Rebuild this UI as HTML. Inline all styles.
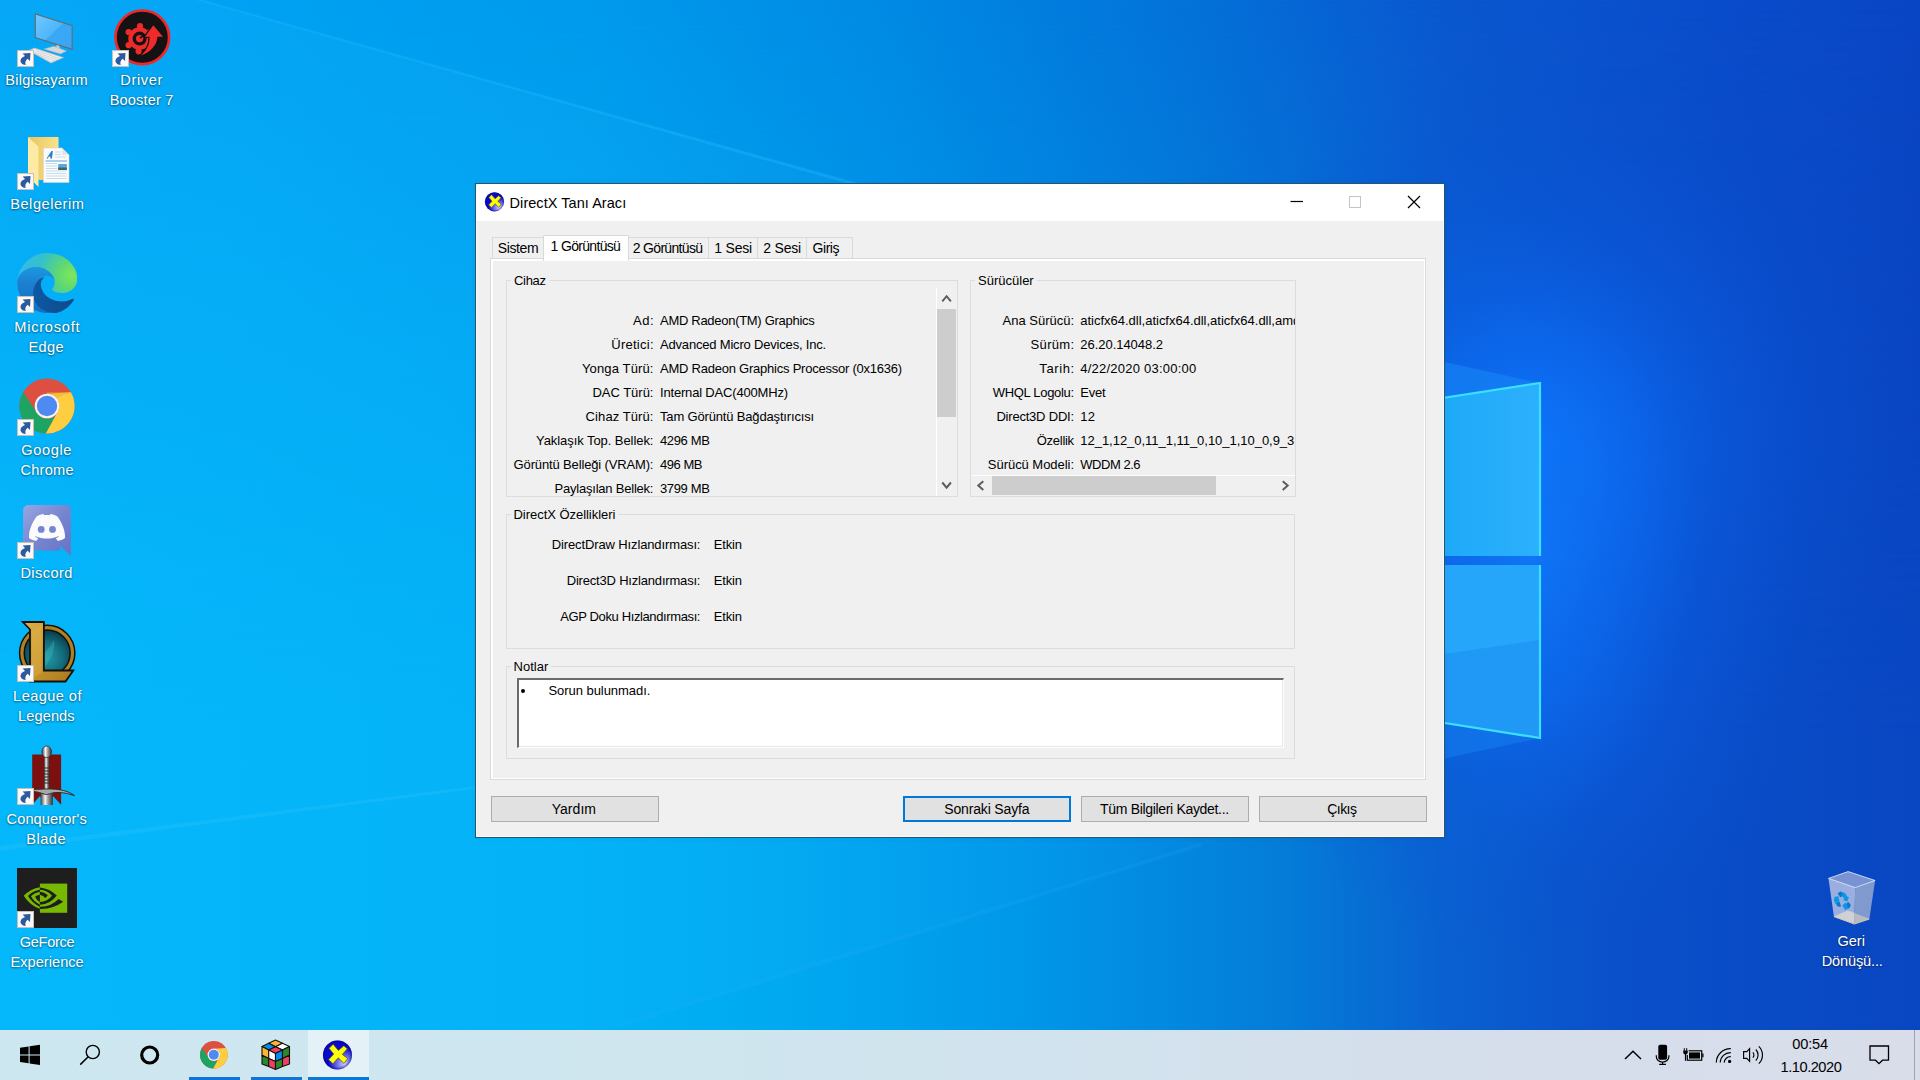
<!DOCTYPE html>
<html><head><meta charset="utf-8">
<style>
*{box-sizing:border-box;margin:0;padding:0}
html,body{width:1920px;height:1080px;overflow:hidden;background:#0078d7;font-family:"Liberation Sans",sans-serif;}
.abs{position:absolute}
#wall{position:absolute;left:0;top:0;width:1920px;height:1080px}
/* desktop icon labels */
.lbl{position:absolute;color:#fff;font-size:15px;line-height:20px;text-align:center;white-space:nowrap;text-shadow:0 1px 2px rgba(0,0,0,.45),0 0 2px rgba(0,0,0,.25);transform:translateX(-50%)}
/* dialog */
#dlg{position:absolute;left:475px;top:183px;width:970px;height:655px;background:#f0f0f0;border:1px solid #26566e;box-shadow:inset 0 0 0 1px #f9f9f9,0 0 6px rgba(0,0,0,.05)}
#ttl{position:absolute;left:0;top:0;width:968px;height:37px;background:#fff}
.t{position:absolute;white-space:nowrap;color:#000;font-size:13px;line-height:16px}
.r{text-align:right}
.grp{position:absolute;border:1px solid #dcdcdc}
.gl{position:absolute;background:#f0f0f0;padding:0 3px;font-size:13px;line-height:16px;white-space:nowrap}
.btn{position:absolute;height:26px;background:#e1e1e1;border:1px solid #adadad;font-size:14.5px;line-height:24px;text-align:center;white-space:nowrap}
.tab{position:absolute;top:237px;height:21px;border:1px solid #d9d9d9;border-bottom:none;background:#f0f0f0}
/* taskbar */
#tb{position:absolute;left:0;top:1030px;width:1920px;height:50px;background:linear-gradient(90deg,#cde7f0 0%,#cfe6ef 35%,#d1e3ee 55%,#d5deeb 75%,#d9ddea 100%)}
</style></head><body>
<svg id="wall" viewBox="0 0 1920 1080">
<defs>
<linearGradient id="bgt" x1="0" y1="0" x2="1" y2="0">
<stop offset="0" stop-color="#00a3f4"/><stop offset=".12" stop-color="#00a2f3"/><stop offset=".31" stop-color="#009aec"/><stop offset=".47" stop-color="#0089e4"/><stop offset=".63" stop-color="#0470d8"/><stop offset=".75" stop-color="#0a58d0"/><stop offset=".9" stop-color="#0a4ccb"/><stop offset="1" stop-color="#0945c4"/>
</linearGradient>
<linearGradient id="bgb" x1="0" y1="0" x2="1" y2="0">
<stop offset="0" stop-color="#00b6fa"/><stop offset=".3" stop-color="#00b2f6"/><stop offset=".42" stop-color="#00a8f0"/><stop offset=".54" stop-color="#0096e8"/><stop offset=".67" stop-color="#047cd8"/><stop offset=".755" stop-color="#0a60d0"/><stop offset=".84" stop-color="#0a50ca"/><stop offset="1" stop-color="#0946c2"/>
</linearGradient>
<linearGradient id="cone" x1="0" y1="0" x2="1500" y2="0" gradientUnits="userSpaceOnUse"><stop offset="0" stop-color="#20c0ff" stop-opacity=".16"/><stop offset=".5" stop-color="#20b0ff" stop-opacity=".12"/><stop offset="1" stop-color="#2090ff" stop-opacity="0"/></linearGradient>
<linearGradient id="vm" x1="0" y1="0" x2="0" y2="1"><stop offset="0" stop-color="#fff" stop-opacity="0"/><stop offset=".28" stop-color="#fff" stop-opacity=".45"/><stop offset=".52" stop-color="#fff" stop-opacity=".85"/><stop offset=".68" stop-color="#fff" stop-opacity="1"/><stop offset="1" stop-color="#fff" stop-opacity="1"/></linearGradient>
<mask id="mk"><rect width="1920" height="1080" fill="url(#vm)"/></mask>
<radialGradient id="glow" cx="1535" cy="440" r="360" gradientUnits="userSpaceOnUse"><stop offset="0" stop-color="#0e74fa" stop-opacity=".95"/><stop offset=".3" stop-color="#0c68f0" stop-opacity=".7"/><stop offset=".65" stop-color="#0a58dc" stop-opacity=".35"/><stop offset="1" stop-color="#0a50d0" stop-opacity="0"/></radialGradient>
<radialGradient id="glow2" cx="1535" cy="660" r="300" gradientUnits="userSpaceOnUse"><stop offset="0" stop-color="#0e6cf4" stop-opacity=".7"/><stop offset=".4" stop-color="#0c60e6" stop-opacity=".4"/><stop offset="1" stop-color="#0a50d0" stop-opacity="0"/></radialGradient>
<radialGradient id="band" cx="0" cy="0" r="1" gradientUnits="userSpaceOnUse" gradientTransform="translate(1530 555) scale(170 270)"><stop offset="0" stop-color="#1280ff" stop-opacity=".6"/><stop offset=".45" stop-color="#0e76f8" stop-opacity=".38"/><stop offset="1" stop-color="#0c6cf0" stop-opacity="0"/></radialGradient>
<linearGradient id="pane" x1="0" y1="0" x2="1" y2="0"><stop offset="0" stop-color="#14a6f6"/><stop offset=".6" stop-color="#1eaaf9"/><stop offset="1" stop-color="#2cb0fc"/></linearGradient>
</defs>
<rect width="1920" height="1080" fill="url(#bgt)"/>
<rect width="1920" height="1080" fill="url(#bgb)" mask="url(#mk)"/>
<rect width="1920" height="1080" fill="url(#glow2)"/>
<rect width="1920" height="1080" fill="url(#glow)"/>
<rect x="1300" y="200" width="500" height="720" fill="url(#band)"/>
<!-- beams -->
<polygon points="-100,-83 1540,374 1540,740 -100,1246" fill="url(#cone)"/>
<polygon points="196,0 203,0 858,183 846,183" fill="#20b8ff" opacity=".38"/>
<polygon points="1200,843 1203,846 622,1027 614,1025" fill="#40b8ff" opacity=".12"/>
<polygon points="0,846 475,786 475,789 0,851" fill="#5fd8ff" opacity=".14"/>
<!-- logo panes -->
<polygon points="1300,330 1540,383 1300,420" fill="#1a90f8" opacity=".45"/>
<polygon points="1300,790 1540,738 1300,700" fill="#1a90f8" opacity=".35"/>
<polygon points="1300,420 1540,383 1540,556 1300,556" fill="url(#pane)"/>
<polygon points="1300,565 1540,565 1540,738 1300,700" fill="#26a6fa"/>
<polygon points="1300,675 1540,640 1540,738 1300,700" fill="#1c94f2" opacity=".7"/>
<polyline points="1300,420 1540,383 1540,556" fill="none" stroke="#3ce0ff" stroke-width="2.2"/>
<polyline points="1540,565 1540,738 1300,700" fill="none" stroke="#3ce0ff" stroke-width="2.2"/>
</svg>
<svg width="0" height="0" style="position:absolute">
<defs>
<symbol id="sc" viewBox="0 0 17 17">
<rect x=".5" y=".5" width="16" height="16" fill="#f4f4f4" stroke="#c9c0b6" stroke-width="1"/>
<rect x="1.5" y="1.500" width="14" height="14" fill="#fbfbfb"/>
<path d="M5.600 3.600 L13.500 3 L13 11 L10.700 8.700 C8.600 10.200 7.800 12.200 8.700 15 C5 14.600 3 12.600 3.600 10 C4.200 7.800 6 6.800 8 6 Z" fill="#2d5a9e"/>
</symbol>
<linearGradient id="mon" x1="0" y1="0" x2="1" y2="1"><stop offset="0" stop-color="#72c8ff"/><stop offset=".5" stop-color="#4db6fb"/><stop offset=".52" stop-color="#38a8f6"/><stop offset="1" stop-color="#3aa6f4"/></linearGradient>
<linearGradient id="fold" x1="0" y1="0" x2="1" y2="0"><stop offset="0" stop-color="#e8c45c"/><stop offset="1" stop-color="#fbe28c"/></linearGradient>
<linearGradient id="disc" x1="0" y1="0" x2="1" y2="1"><stop offset="0" stop-color="#96a6e2"/><stop offset=".5" stop-color="#7685d0"/><stop offset="1" stop-color="#6672c4"/></linearGradient>
<radialGradient id="lolc" cx=".5" cy=".6" r=".6"><stop offset="0" stop-color="#2498a6"/><stop offset=".55" stop-color="#126a7a"/><stop offset="1" stop-color="#06323e"/></radialGradient>
<linearGradient id="lolg" x1="0" y1="0" x2="1" y2="1"><stop offset="0" stop-color="#dcae4a"/><stop offset=".5" stop-color="#c8962e"/><stop offset="1" stop-color="#a87820"/></linearGradient>
<linearGradient id="steel" x1="0" y1="0" x2="1" y2="0"><stop offset="0" stop-color="#3c3c3c"/><stop offset=".38" stop-color="#f6f6f6"/><stop offset=".62" stop-color="#9a9a9a"/><stop offset="1" stop-color="#303030"/></linearGradient>
<linearGradient id="edge1" x1="0" y1="0" x2="1" y2="0"><stop offset="0" stop-color="#0c59a4"/><stop offset="1" stop-color="#114a8b"/></linearGradient>
<linearGradient id="edge2" x1="0" y1="0" x2="0" y2="1"><stop offset="0" stop-color="#1b9de2"/><stop offset=".4" stop-color="#1c7fd0"/><stop offset="1" stop-color="#1270c6"/></linearGradient>
<radialGradient id="edge3" cx="230" cy="95" r="230" gradientUnits="userSpaceOnUse"><stop offset="0" stop-color="#7ee85a"/><stop offset=".25" stop-color="#5fd872"/><stop offset=".6" stop-color="#35c1c8"/><stop offset="1" stop-color="#35b8f0"/></radialGradient>
</defs></svg>

<!-- Bilgisayarim -->
<svg class="abs" style="left:16px;top:10px" width="64" height="60" viewBox="16 10 64 60">
<polygon points="28.500,50.500 34.500,48 63.500,57.500 51,63" fill="#e4e4e4" stroke="#b8b8b8" stroke-width=".6"/>
<polygon points="31,51 35,49.500 60,57.600 51.500,61" fill="#f6f6f6"/>
<path d="M33 51.500 L57 59.500 M35.500 50.500 L59 58.300 M31.500 52.500 L54 60.500" stroke="#c4c4c4" stroke-width=".7" fill="none"/>
<polygon points="44,49 54,46.200 66.500,51 60.500,54" fill="#d4d8dc" stroke="#aab0b6" stroke-width=".5"/>
<polygon points="56.500,44 59.500,45 59.500,49 56.500,48" fill="#c8ccd0"/>
<polygon points="34.800,13.200 72.600,25.300 72.600,50 34.800,38" fill="#686868"/>
<polygon points="35.900,14.700 71.600,26.100 71.600,48.600 35.900,37.200" fill="url(#mon)"/>
</svg>

<svg class="abs" style="left:17px;top:50px" width="17" height="17"><use href="#sc"/></svg>

<!-- Driver Booster -->
<svg class="abs" style="left:112px;top:8px" width="60" height="60" viewBox="112 8 60 60">
<circle cx="142.300" cy="37.300" r="26.800" fill="#141212" stroke="#f22626" stroke-width="2.700"/>
<g fill="#ee2a2a">
<circle cx="139.600" cy="38.600" r="11.300"/>
<circle cx="140" cy="26.200" r="3.100"/><circle cx="128.600" cy="32" r="3.100"/><circle cx="128.600" cy="45.200" r="3.100"/><circle cx="138.600" cy="51.300" r="3.100"/><circle cx="150" cy="32" r="3.100"/>
</g>
<circle cx="139.600" cy="38.600" r="7" fill="#141212"/>
<circle cx="139.600" cy="38.600" r="3.700" fill="#ee2a2a"/>
<path d="M140 38.200 L144.200 34.600" stroke="#141212" stroke-width="1.600"/>
<path d="M153.300 25.300 L163 36.800 L157.500 36.800 C157 45 151 52 141 55.500 C147 50 150 44 149.500 36.800 L145 36.800 Z" fill="#ee2a2a" stroke="#141212" stroke-width="2.400" stroke-linejoin="round" paint-order="stroke"/>
</svg>
<svg class="abs" style="left:112px;top:50px" width="17" height="17"><use href="#sc"/></svg>

<!-- Belgelerim -->
<svg class="abs" style="left:16px;top:133px" width="64" height="60" viewBox="16 133 64 60">
<polygon points="28,137 58.500,137 58.500,180 38.500,180" fill="url(#fold)"/>
<polygon points="28,137 38.500,146.500 38.500,187 28,176.500" fill="#fdeaa4"/>
<polygon points="43.500,148 62,148 69,155 69,182.500 43.500,182.500" fill="#fbfbfb" stroke="#d4d4d4" stroke-width=".6"/>
<polygon points="62,148 62,155 69,155" fill="#e4e4e4"/>
<path d="M55 152 H61 M55 154.500 H61 M55 157 H66.500 M46 163.500 H57 M46 166 H57 M46 168.500 H57 M46 171 H66.500 M46 173.500 H66.500 M46 176 H66.500 M46 178.500 H66.500" stroke="#b9d4ea" stroke-width=".8"/>
<path d="M45.500 161 H67" stroke="#58a8e0" stroke-width="1"/>
<rect x="58.200" y="164" width="8.600" height="6" fill="#5aa8e0"/><rect x="58.200" y="167.500" width="8.600" height="2.500" fill="#3a6a5a"/>
<path d="M46.500 158.500 L51.500 151 L52.800 151 L52 158.500 L50.200 158.500 L50.500 156.500 L48.800 156.500 L47.800 158.500 Z" fill="#2a78c8"/>
</svg>
<svg class="abs" style="left:17px;top:173px" width="17" height="17"><use href="#sc"/></svg>

<!-- Edge -->
<svg class="abs" style="left:16.700px;top:252.500px" width="60.500" height="60" viewBox="0 0 256 256">
<path d="M235.700 195.500a93.700 93.700 0 0 1-10.600 4.700 101.900 101.900 0 0 1-35.900 6.400c-47.300 0-88.500-32.500-88.500-74.300a31.500 31.500 0 0 1 16.400-27.300c-42.800 1.800-53.800 46.400-53.800 72.500 0 73.900 68.100 81.400 82.800 81.400 7.900 0 19.800-2.300 27-4.600l1.300-.4a128.300 128.300 0 0 0 66.600-52.800 4 4 0 0 0-5.300-5.600Z" fill="url(#edge1)"/>
<path d="M105.700 241.400a79.200 79.200 0 0 1-22.700-21.300 80.700 80.700 0 0 1 29.500-119.900c3.200-1.500 8.500-4.100 15.600-4a32.400 32.400 0 0 1 25.700 13 31.900 31.900 0 0 1 6.300 18.700c0-.2 24.500-79.600-80-79.600-43.900 0-80 41.600-80 78.200a130.200 130.200 0 0 0 12.100 56 128 128 0 0 0 156.400 67 75.500 75.500 0 0 1-62.800-8.100Z" fill="url(#edge2)"/>
<path d="M152.300 148.900c-.9 1-3.400 2.500-3.400 5.600 0 2.600 1.700 5.200 4.800 7.300 14.300 10 41.400 8.600 41.500 8.600a59.600 59.600 0 0 0 30.300-8.300 61.400 61.400 0 0 0 30.400-52.900c.3-22.400-8-37.300-11.300-43.900C223.500 23.900 177.700 0 128 0A128 128 0 0 0 0 126.200c.5-36.500 36.800-66 80-66 3.500 0 23.500.3 42 10 16.300 8.600 24.900 19 30.800 29.300 6.200 10.700 7.300 24.100 7.300 29.500s-2.700 13.300-7.800 19.900Z" fill="url(#edge3)"/>
</svg>
<svg class="abs" style="left:17px;top:296px" width="17" height="17"><use href="#sc"/></svg>

<!-- Chrome -->
<svg class="abs" style="left:19px;top:378px" width="56" height="56" viewBox="-28 -28 56 56">
<circle r="27.600" fill="#dd4f41"/>
<path d="M-23.900 -13.800 A27.600 27.600 0 0 0 -1.200 27.570 L10.560 7.200 A12.200 12.200 0 0 1 -10.560 6.100 Z" fill="#1da462"/>
<path d="M-1.200 27.570 A27.600 27.600 0 0 0 23.900 -13.800 L0 -12.200 A12.200 12.200 0 0 1 10.560 6.100 Z" fill="#ffcd40"/>
<path d="M23.900 -13.800 L0 -13.800 L0 -12 L10 -8 Z" fill="#e8b030" opacity=".5"/>
<circle r="12.300" fill="#f4f4f4"/>
<circle r="10.200" fill="#4f8af2"/>
</svg>
<svg class="abs" style="left:17px;top:419px" width="17" height="17"><use href="#sc"/></svg>

<!-- Discord -->
<svg class="abs" style="left:20px;top:502px" width="56" height="58" viewBox="20 502 56 58">
<path d="M28.100 505 H65.900 a5 5 0 0 1 5 5 V556 L59.500 545.500 L60.500 550.500 H28.100 a5 5 0 0 1 -5 -5 V510 a5 5 0 0 1 5 -5 Z" fill="url(#disc)"/>
<path d="M36.500 516.500 C39 515 41.500 514.300 43.500 514 L44.200 515.300 C46 515 48 515 49.800 515.300 L50.500 514 C52.500 514.300 55 515 57.500 516.500 C62 523 65.500 531 65 538 C62.500 539.800 60 540.600 57.800 541 L55.800 538.300 C57 537.900 58 537.400 59 536.800 L58.300 536.200 C51.500 539.300 42.500 539.300 35.700 536.200 L35 536.800 C36 537.400 37 537.900 38.200 538.300 L36.200 541 C34 540.600 31.500 539.800 29 538 C28.500 531 32 523 36.500 516.500 Z" fill="#fbfbfd"/>
<circle cx="41.200" cy="529.400" r="3.400" fill="#7685d0"/><circle cx="52.500" cy="529.400" r="3.400" fill="#7685d0"/>
</svg>
<svg class="abs" style="left:17px;top:542px" width="17" height="17"><use href="#sc"/></svg>

<!-- LoL -->
<svg class="abs" style="left:16px;top:620px" width="64" height="64" viewBox="16 620 64 64">
<circle cx="47.200" cy="653" r="25" fill="url(#lolc)"/>
<path d="M40 660 C44 652 50 648 54 640 C56 650 50 660 44 668 Z" fill="#3cc0c8" opacity=".35"/>
<circle cx="47.200" cy="653" r="25.300" fill="none" stroke="#14100a" stroke-width="6.200"/>
<circle cx="47.200" cy="653" r="25.300" fill="none" stroke="#b08028" stroke-width="3.200"/>
<polygon points="22.800,622 43.900,622 43.900,670.500 73.300,670.500 65.500,681.500 30,681.500 30,629.500" fill="url(#lolg)" stroke="#14100a" stroke-width="1.800" stroke-linejoin="miter"/>
<polygon points="32,631 41.500,625 41.500,672.500 32,679" fill="#e4b850" opacity=".35"/>
</svg>
<svg class="abs" style="left:17px;top:665px" width="17" height="17"><use href="#sc"/></svg>

<!-- Conqueror's Blade -->
<svg class="abs" style="left:16px;top:744px" width="64" height="64" viewBox="16 744 64 64">
<polygon points="32.200,754.400 61.100,754.400 61.100,804.800 53,796 46.700,804.800 40,796 32.200,804.800" fill="#7c100e"/>
<rect x="40.600" y="792" width="12.200" height="13" fill="url(#steel)"/>
<rect x="44.200" y="756" width="5" height="35" fill="url(#steel)"/>
<path d="M44 768 H49.500 M44 771 H49.500 M44 774 H49.500 M44 777 H49.500 M44 780 H49.500 M44 783 H49.500" stroke="#2a2a2a" stroke-width="1.2"/>
<ellipse cx="46.700" cy="751.800" rx="4.800" ry="5.800" fill="url(#steel)" stroke="#303030" stroke-width=".8"/>
<path d="M33.300 789.500 C42 789 52 788.500 58 789.500 C66 790.500 71 793 74.400 795.500 C70 794.500 66 792.600 58 792.500 C52 792.400 48 794.500 46.500 794.500 C44 794.500 40 792 33.300 791.500 Z" fill="#a8a8a8" stroke="#2c2c2c" stroke-width="1"/>
</svg>
<svg class="abs" style="left:17px;top:788px" width="17" height="17"><use href="#sc"/></svg>

<!-- GeForce -->
<svg class="abs" style="left:17px;top:868px" width="60" height="60" viewBox="17 868 60 60">
<rect x="17" y="868" width="60" height="60" fill="#1e1e1e"/>
<rect x="39.900" y="883.600" width="27.300" height="29.200" fill="#76b900"/>
<g fill="#76b900">
<path d="M39.9 887.200 Q31 888.500 23.700 895.700 Q30 905.500 39.900 908.800 V906.700 Q32.500 903.500 28 896 Q33 890.500 39.900 889.700 Z"/>
<path d="M39.900 891.700 Q34 892.800 31 896.300 Q34 902 39.900 904.700 V902 Q36.500 900 35 896.700 Q36.800 895.200 39.900 894.800 Z"/>
</g>
<g fill="#1e1e1e">
<path d="M39.900 887.400 Q49.700 888.400 56.800 895.500 Q50 904.500 39.900 904.700 V902.100 Q47.500 901.700 52 895.700 Q47.500 890 39.900 889.700 Z"/>
<path d="M39.900 891.800 Q45 892.300 47.800 895.500 L45.300 898 Q43.500 895.500 39.900 894.800 Z"/>
<path d="M39.900 906.700 Q51 907 58.500 899 L63.200 901.700 Q52 909.500 39.900 908.900 Z"/>
</g>
</svg>
<svg class="abs" style="left:17px;top:911px" width="17" height="17"><use href="#sc"/></svg>

<!-- Recycle bin -->
<svg class="abs" style="left:1822px;top:866px" width="60" height="64" viewBox="1822 866 60 64">
<polygon points="1828.500,878.400 1848.100,871.600 1875.100,880.500 1855.200,887.600" fill="#7892d4"/>
<polygon points="1828.500,878.400 1855.200,887.600 1854.300,923.800 1833.900,916.400" fill="#aebde4" opacity=".88"/>
<polygon points="1855.200,887.600 1875.100,880.500 1869.400,918.800 1854.300,923.800" fill="#8ea3d2" opacity=".9"/>
<polygon points="1847.500,910.500 1833.900,916.400 1854.300,923.800 1854.600,912.800" fill="#d3d3d3" opacity=".95"/>
<polygon points="1847.500,910.500 1854.600,912.800 1854.300,923.800 1869.400,918.800" fill="#bdbdc0" opacity=".95"/>
<polyline points="1833.900,916.600 1854.300,924 1869.400,919" fill="none" stroke="#d9cbb0" stroke-width="1"/>
<polygon points="1828.500,878.400 1848.100,871.600 1875.100,880.500 1855.200,887.600" fill="none" stroke="#e8eefa" stroke-width=".9" opacity=".9"/>
<g transform="translate(1842.300 899.800)">
<path d="M-4.600 -6.600 L-1.600 -8.400 L2.600 -6.800 L5.600 -2.600 L6.800 -3 L5 1.800 L.6 .2 L2 -.6 L.2 -3.400 L-2 -2.600 Z" fill="#0c96e6"/>
<path d="M-4.600 -6.600 L-1.600 -8.400 L.4 -5.200 L-2 -2.600 Z" fill="#0a78cc"/>
<path d="M-7.600 -3 L-3.400 -3.600 L-3.800 -2.400 L-2.600 1.400 L-3.800 2 L-1.400 6.800 L-4.400 6.600 L-7.400 3.200 L-8.400 .2 Z" fill="#0c96e6"/>
<path d="M-5.600 3.400 L-2.600 2 L-1.400 6.800 L-4.400 6.600 Z" fill="#0a78cc"/>
<path d="M0 5.600 L3.600 2.400 L3.800 3.800 L6.400 2.800 L8.400 5.400 L6.600 8.800 L3.800 9.600 L3.400 11 Z" fill="#0c96e6"/>
<path d="M4.800 2.800 L6.400 2.400 L8.400 5.400 L6.600 8.800 L5 6.600 Z" fill="#0a78cc"/>
</g>
</svg>

<div id="dlg"></div>
<div class="abs" style="left:476px;top:184px;width:968px;height:37px;background:#fff"></div>
<!-- title icon -->
<svg class="abs" style="left:484px;top:192px" width="21" height="21" viewBox="0 0 21 21">
<defs><radialGradient id="dxg" cx=".74" cy=".8" r=".55"><stop offset="0" stop-color="#d0d0ff"/><stop offset=".45" stop-color="#7070f0"/><stop offset="1" stop-color="#0808d0"/></radialGradient>
<radialGradient id="dxs" cx=".5" cy=".5" r=".5"><stop offset=".8" stop-color="#000060" stop-opacity="0"/><stop offset="1" stop-color="#000050" stop-opacity=".45"/></radialGradient></defs>
<circle cx="10.500" cy="9.800" r="9.600" fill="url(#dxg)"/>
<circle cx="10.500" cy="9.800" r="9.600" fill="url(#dxs)"/>
<path d="M4.900 5.400 L7.600 2.700 L11.100 6.800 L14.700 3.700 L17 5.700 L13.700 9.400 L17.200 12.100 L14.800 15.400 L11 11.700 L7.500 15.600 L4.600 12.900 L8 9.200 Z" fill="#ffff08" stroke="#55550a" stroke-width=".6" stroke-linejoin="round"/>
</svg>
<!-- window buttons -->
<svg class="abs" style="left:1280px;top:184px" width="164" height="37" viewBox="0 0 164 37">
<path d="M10.5 17.5 H23" stroke="#000" stroke-width="1.2" fill="none"/>
<rect x="69.5" y="12.5" width="11" height="11" stroke="#c4c4c4" stroke-width="1" fill="none"/>
<path d="M128 12 L140 24 M140 12 L128 24" stroke="#000" stroke-width="1.25" fill="none"/>
</svg>
<!-- tab pane -->
<div class="abs" style="left:490px;top:258px;width:936px;height:522px;border:1px solid #dadada;background:#fff"></div>
<div class="abs" style="left:493px;top:261px;width:931px;height:517px;background:#f0f0f0"></div>
<!-- tabs -->
<div class="tab" style="left:492px;width:52px"></div>
<div class="tab" style="left:628px;width:81px"></div>
<div class="tab" style="left:708px;width:50px"></div>
<div class="tab" style="left:757px;width:50px"></div>
<div class="tab" style="left:806px;width:47px"></div>
<div class="tab" style="left:543px;width:86px;top:235px;height:26px;background:#fff;border-color:#dadada"></div>
<!-- groups -->
<div class="grp" style="left:506px;top:280px;width:452px;height:217px"></div>
<div class="grp" style="left:970px;top:280px;width:326px;height:217px"></div>
<div class="grp" style="left:506px;top:514px;width:789px;height:135px"></div>
<div class="grp" style="left:506px;top:666px;width:789px;height:93px"></div>
<!-- Cihaz scrollbar -->
<div class="abs" style="left:936px;top:288px;width:21px;height:208px;background:#f0f0f0;border-left:1px solid #fff"></div>
<div class="abs" style="left:937px;top:309px;width:19px;height:107.500px;background:#cdcdcd"></div>
<svg class="abs" style="left:936px;top:288px" width="21" height="208" viewBox="0 0 21 208"><path d="M6.300 13.300 L10.600 8.200 L14.900 13.300 M6.300 194.500 L10.600 199.600 L14.900 194.500" stroke="#5c5c5c" stroke-width="2" fill="none"/></svg>
<!-- Suruculer h scrollbar -->
<div class="abs" style="left:971px;top:475px;width:324px;height:21px;background:#f0f0f0;border-top:1px solid #fff"></div>
<div class="abs" style="left:992px;top:476px;width:224px;height:19px;background:#cdcdcd"></div>
<svg class="abs" style="left:971px;top:475px" width="324" height="21" viewBox="0 0 324 21"><path d="M12.300 6.300 L7.300 10.600 L12.300 14.900 M311.700 6.300 L316.700 10.600 L311.700 14.900" stroke="#5c5c5c" stroke-width="2" fill="none"/></svg>
<!-- notes textbox -->
<div class="abs" style="left:517px;top:678px;width:767px;height:69.500px;background:#fff;border-top:2px solid #6a6a6a;border-left:2px solid #6a6a6a;border-right:1px solid #fff;border-bottom:1px solid #fff;box-shadow:inset -1px -1px 0 #e6e6e6"></div>
<div class="abs" style="left:521px;top:689px;width:4px;height:4px;border-radius:2px;background:#000"></div>
<!-- buttons -->
<div class="btn" style="left:491px;top:796px;width:168px"></div>
<div class="btn" style="left:903px;top:796px;width:168px;border:2px solid #0078d7"></div>
<div class="btn" style="left:1081px;top:796px;width:168px"></div>
<div class="btn" style="left:1259px;top:796px;width:168px"></div>

<div id="tb"></div>
<div class="abs" style="left:308px;top:1030px;width:61px;height:50px;background:rgba(255,255,255,.45)"></div>
<div class="abs" style="left:189px;top:1077px;width:51px;height:3px;background:#0a78d4"></div>
<div class="abs" style="left:251px;top:1077px;width:51px;height:3px;background:#0a78d4"></div>
<div class="abs" style="left:308px;top:1077px;width:61px;height:3px;background:#0a78d4"></div>
<svg class="abs" style="left:0;top:1030px" width="400" height="50" viewBox="0 1030 400 50">
<!-- start -->
<polygon points="20,1047.700 28.600,1046.500 28.600,1054.400 20,1054.400" fill="#000"/>
<polygon points="29.600,1046.300 40,1044.800 40,1054.400 29.600,1054.400" fill="#000"/>
<polygon points="20,1055.400 28.600,1055.400 28.600,1063.300 20,1062.100" fill="#000"/>
<polygon points="29.600,1055.400 40,1055.400 40,1064.900 29.600,1063.400" fill="#000"/>
<!-- search -->
<circle cx="92.800" cy="1052" r="6.600" fill="none" stroke="#000" stroke-width="1.400"/>
<path d="M88.200 1056.800 L80.200 1064.600" stroke="#000" stroke-width="1.500"/>
<!-- cortana -->
<circle cx="149.700" cy="1055" r="8" fill="none" stroke="#000" stroke-width="3.200"/>
<!-- chrome -->
<g transform="translate(213.800 1054.800) scale(.5)">
<circle r="27.600" fill="#dd4f41"/>
<path d="M-23.900 -13.800 A27.600 27.600 0 0 0 -1.200 27.570 L10.560 7.200 A12.200 12.200 0 0 1 -10.560 6.100 Z" fill="#1da462"/>
<path d="M-1.200 27.570 A27.600 27.600 0 0 0 23.900 -13.800 L0 -12.200 A12.200 12.200 0 0 1 10.560 6.100 Z" fill="#ffcd40"/>
<circle r="12.400" fill="#f4f4f4"/>
<circle r="10" fill="#4f8af2"/>
</g>
<!-- cube -->
<g stroke="#111" stroke-width="1.100" stroke-linejoin="round">
<polygon points="275.500,1040 282.500,1043.300 275.500,1046.700 268.700,1043.300" fill="#ffb62e"/>
<polygon points="268.700,1043.300 275.500,1046.700 268.700,1050 262,1046.500" fill="#0a8af0"/>
<polygon points="282.500,1043.300 289.500,1046.500 282.500,1050 275.500,1046.700" fill="#fff"/>
<polygon points="275.500,1046.700 282.500,1050 275.500,1053.500 268.700,1050" fill="#f04060"/>
<polygon points="262,1046.500 268.700,1050 268.700,1058.500 262,1055.200" fill="#ffb62e"/>
<polygon points="268.700,1050 275.500,1053.500 275.500,1061.500 268.700,1058.500" fill="#fff"/>
<polygon points="262,1055.200 268.700,1058.500 268.700,1066.500 262,1064" fill="#2a8a2a"/>
<polygon points="268.700,1058.500 275.500,1061.500 275.500,1069.500 268.700,1066.500" fill="#f04060"/>
<polygon points="275.500,1053.500 282.500,1050 282.500,1058.500 275.500,1061.500" fill="#0a8af0"/>
<polygon points="282.500,1050 289.500,1046.500 289.500,1055.200 282.500,1058.500" fill="#2a8a2a"/>
<polygon points="275.500,1061.500 282.500,1058.500 282.500,1066.500 275.500,1069.500" fill="#2a8a2a"/>
<polygon points="282.500,1058.500 289.500,1055.200 289.500,1064 282.500,1066.500" fill="#f04060"/>
</g>
<!-- dx -->
<defs><radialGradient id="dxg2" cx=".74" cy=".8" r=".55"><stop offset="0" stop-color="#d0d0ff"/><stop offset=".45" stop-color="#7070f0"/><stop offset="1" stop-color="#0808d0"/></radialGradient><radialGradient id="dxs2" cx=".5" cy=".5" r=".5"><stop offset=".8" stop-color="#000060" stop-opacity="0"/><stop offset="1" stop-color="#000050" stop-opacity=".45"/></radialGradient></defs>
<circle cx="337.500" cy="1055" r="14.500" fill="url(#dxg2)"/><circle cx="337.500" cy="1055" r="14.500" fill="url(#dxs2)"/>
<path transform="translate(337.500 1055) scale(1.51) translate(-10.500 -9.800)" d="M4.900 5.400 L7.600 2.700 L11.100 6.800 L14.700 3.700 L17 5.700 L13.700 9.400 L17.200 12.100 L14.800 15.400 L11 11.700 L7.500 15.600 L4.600 12.900 L8 9.200 Z" fill="#ffff08" stroke="#55550a" stroke-width=".5" stroke-linejoin="round"/>
</svg>
<!-- tray -->
<svg class="abs" style="left:1600px;top:1030px" width="320" height="50" viewBox="1600 1030 320 50">
<path d="M1625 1059 L1633 1051.300 L1641 1059" fill="none" stroke="#000" stroke-width="1.500"/>
<!-- mic -->
<rect x="1658.300" y="1044.800" width="8.800" height="15" rx="1.800" fill="#000"/>
<path d="M1656.300 1055.200 v1.400 a6.300 5.600 0 0 0 12.600 0 v-1.400 M1662.600 1062.200 V1064.300 M1659.200 1064.400 H1665.900" fill="none" stroke="#000" stroke-width="1.200"/>
<!-- battery -->
<rect x="1687.300" y="1050.800" width="14.400" height="9.400" fill="none" stroke="#000" stroke-width="1.200"/>
<rect x="1689" y="1052.400" width="11" height="6.200" fill="#000"/>
<rect x="1702.200" y="1053.500" width="1.300" height="3.800" fill="#000"/>
<rect x="1682.600" y="1050" width="6" height="5" fill="#d7ddea"/>
<path d="M1684.300 1048.200 v2.500 M1686.700 1048.200 v2.500" stroke="#000" stroke-width="1" fill="none"/>
<path d="M1683.200 1050.600 h4.600 v1.600 a2.300 2.300 0 0 1 -4.600 0 z" fill="#000"/>
<path d="M1685.500 1054 V1060.800" stroke="#000" stroke-width="1.200"/>
<!-- wifi -->
<g fill="none" stroke="#000" stroke-width="1.150">
<path d="M1716.300 1062.400 A 14.200 14.200 0 0 1 1730.800 1048.600"/>
<path d="M1720.200 1062.600 A 10.200 10.200 0 0 1 1730.800 1052.600"/>
<path d="M1724.200 1062.600 A 6.200 6.200 0 0 1 1730.800 1056.700"/>
</g>
<circle cx="1729.600" cy="1061.400" r="1.600" fill="#000"/>
<!-- volume -->
<path d="M1743.600 1051.600 h3.200 l2.800 -2.900 v12.600 l-2.800 -2.900 h-3.200 z" fill="none" stroke="#000" stroke-width="1.150" stroke-linejoin="miter"/>
<g fill="none" stroke="#000" stroke-width="1.150">
<path d="M1752.800 1052.300 a3.800 3.800 0 0 1 0 5.400"/>
<path d="M1755.800 1049.500 a7.800 7.800 0 0 1 0 11"/>
<path d="M1758.800 1046.300 a12.200 12.200 0 0 1 0 17.400"/>
</g>
<!-- notif -->
<path d="M1870 1046 H1888.500 V1060.200 H1882.500 L1879 1063.700 L1875.500 1060.200 H1870 Z" fill="none" stroke="#000" stroke-width="1.300"/>
<rect x="1914" y="1030" width="1" height="50" fill="#9aa4b4"/>
</svg>

<div class="t" style="left:509.6px;top:193.5px;font-size:14.5px;line-height:18px;letter-spacing:0.048px">DirectX Tanı Aracı</div>
<div class="t" style="left:497.8px;top:238.9px;font-size:14px;line-height:18px;letter-spacing:-0.379px">Sistem</div>
<div class="t" style="left:550.6px;top:236.9px;font-size:14px;line-height:18px;letter-spacing:-0.676px">1 Görüntüsü</div>
<div class="t" style="left:632.7px;top:238.9px;font-size:14px;line-height:18px;letter-spacing:-0.666px">2 Görüntüsü</div>
<div class="t" style="left:714.3px;top:238.9px;font-size:14px;line-height:18px;letter-spacing:-0.224px">1 Sesi</div>
<div class="t" style="left:763.3px;top:238.9px;font-size:14px;line-height:18px;letter-spacing:-0.224px">2 Sesi</div>
<div class="t" style="left:812.6px;top:238.9px;font-size:14px;line-height:18px;letter-spacing:-0.470px">Giriş</div>
<div class="t" style="left:633.0px;top:312.8px;font-size:13px;line-height:16px;letter-spacing:0.492px">Ad:</div>
<div class="t" style="left:660.0px;top:312.8px;font-size:13px;line-height:16px;letter-spacing:-0.291px">AMD Radeon(TM) Graphics</div>
<div class="t" style="left:611.3px;top:336.8px;font-size:13px;line-height:16px;letter-spacing:0.250px">Üretici:</div>
<div class="t" style="left:660.0px;top:336.8px;font-size:13px;line-height:16px;letter-spacing:-0.186px">Advanced Micro Devices, Inc.</div>
<div class="t" style="left:581.9px;top:360.8px;font-size:13px;line-height:16px;letter-spacing:0.147px">Yonga Türü:</div>
<div class="t" style="left:660.0px;top:360.8px;font-size:13px;line-height:16px;letter-spacing:-0.231px">AMD Radeon Graphics Processor (0x1636)</div>
<div class="t" style="left:592.4px;top:384.8px;font-size:13px;line-height:16px;letter-spacing:-0.009px">DAC Türü:</div>
<div class="t" style="left:660.0px;top:384.8px;font-size:13px;line-height:16px;letter-spacing:-0.179px">Internal DAC(400MHz)</div>
<div class="t" style="left:585.6px;top:408.8px;font-size:13px;line-height:16px;letter-spacing:0.093px">Cihaz Türü:</div>
<div class="t" style="left:660.0px;top:408.8px;font-size:13px;line-height:16px;letter-spacing:-0.165px">Tam Görüntü Bağdaştırıcısı</div>
<div class="t" style="left:536.0px;top:432.8px;font-size:13px;line-height:16px;letter-spacing:-0.063px">Yaklaşık Top. Bellek:</div>
<div class="t" style="left:660.0px;top:432.8px;font-size:13px;line-height:16px;letter-spacing:-0.358px">4296 MB</div>
<div class="t" style="left:513.6px;top:456.8px;font-size:13px;line-height:16px;letter-spacing:-0.144px">Görüntü Belleği (VRAM):</div>
<div class="t" style="left:660.0px;top:456.8px;font-size:13px;line-height:16px;letter-spacing:-0.463px">496 MB</div>
<div class="t" style="left:554.6px;top:480.8px;font-size:13px;line-height:16px;letter-spacing:-0.219px">Paylaşılan Bellek:</div>
<div class="t" style="left:660.0px;top:480.8px;font-size:13px;line-height:16px;letter-spacing:-0.358px">3799 MB</div>
<div class="t" style="left:1002.6px;top:312.8px;font-size:13px;line-height:16px;letter-spacing:-0.005px">Ana Sürücü:</div>
<div class="t" style="left:1080.3px;top:312.8px;font-size:13px;line-height:16px;letter-spacing:-0.011px;width:214.5px;overflow:hidden">aticfx64.dll,aticfx64.dll,aticfx64.dll,amdxc64.dll</div>
<div class="t" style="left:1030.6px;top:336.8px;font-size:13px;line-height:16px;letter-spacing:0.319px">Sürüm:</div>
<div class="t" style="left:1080.3px;top:336.8px;font-size:13px;line-height:16px;letter-spacing:-0.037px">26.20.14048.2</div>
<div class="t" style="left:1039.3px;top:360.8px;font-size:13px;line-height:16px;letter-spacing:0.601px">Tarih:</div>
<div class="t" style="left:1080.3px;top:360.8px;font-size:13px;line-height:16px;letter-spacing:0.226px">4/22/2020 03:00:00</div>
<div class="t" style="left:992.7px;top:384.8px;font-size:13px;line-height:16px;letter-spacing:-0.307px">WHQL Logolu:</div>
<div class="t" style="left:1080.3px;top:384.8px;font-size:13px;line-height:16px;letter-spacing:-0.272px">Evet</div>
<div class="t" style="left:996.4px;top:408.8px;font-size:13px;line-height:16px;letter-spacing:-0.207px">Direct3D DDI:</div>
<div class="t" style="left:1080.3px;top:408.8px;font-size:13px;line-height:16px;letter-spacing:0.231px">12</div>
<div class="t" style="left:1036.8px;top:432.8px;font-size:13px;line-height:16px;letter-spacing:-0.286px">Özellik</div>
<div class="t" style="left:1080.3px;top:432.8px;font-size:13px;line-height:16px;letter-spacing:-0.030px;width:214.5px;overflow:hidden">12_1,12_0,11_1,11_0,10_1,10_0,9_3,9_2,9_1</div>
<div class="t" style="left:987.8px;top:456.8px;font-size:13px;line-height:16px;letter-spacing:-0.032px">Sürücü Modeli:</div>
<div class="t" style="left:1080.3px;top:456.8px;font-size:13px;line-height:16px;letter-spacing:-0.480px">WDDM 2.6</div>
<div class="t" style="left:551.7px;top:537.2px;font-size:13px;line-height:16px;letter-spacing:-0.121px">DirectDraw Hızlandırması:</div>
<div class="t" style="left:566.7px;top:573.2px;font-size:13px;line-height:16px;letter-spacing:-0.190px">Direct3D Hızlandırması:</div>
<div class="t" style="left:560.3px;top:609.2px;font-size:13px;line-height:16px;letter-spacing:-0.382px">AGP Doku Hızlandırması:</div>
<div class="t" style="left:713.7px;top:537.2px;font-size:13px;line-height:16px;letter-spacing:-0.152px">Etkin</div>
<div class="t" style="left:713.7px;top:573.2px;font-size:13px;line-height:16px;letter-spacing:-0.152px">Etkin</div>
<div class="t" style="left:713.7px;top:609.2px;font-size:13px;line-height:16px;letter-spacing:-0.152px">Etkin</div>
<div class="t" style="left:548.5px;top:682.5px;font-size:13px;line-height:16px;letter-spacing:-0.055px">Sorun bulunmadı.</div>
<div class="gl" style="left:510.9px;top:272.5px;letter-spacing:-0.262px">Cihaz</div>
<div class="gl" style="left:975.0px;top:272.5px;letter-spacing:0.007px">Sürücüler</div>
<div class="gl" style="left:510.5px;top:506.5px;letter-spacing:-0.038px">DirectX Özellikleri</div>
<div class="gl" style="left:510.5px;top:658.5px;letter-spacing:0.023px">Notlar</div>
<div class="t" style="left:551.7px;top:800.2px;font-size:14px;line-height:18px;letter-spacing:0.041px">Yardım</div>
<div class="t" style="left:944.3px;top:800.2px;font-size:14px;line-height:18px;letter-spacing:-0.164px">Sonraki Sayfa</div>
<div class="t" style="left:1100.1px;top:800.2px;font-size:14px;line-height:18px;letter-spacing:-0.326px">Tüm Bilgileri Kaydet...</div>
<div class="t" style="left:1327.3px;top:800.2px;font-size:14px;line-height:18px;letter-spacing:-0.573px">Çıkış</div>
<div class="lbl" style="left:46.6px;top:70.3px;letter-spacing:0.283px;font-size:14.6px">Bilgisayarım</div>
<div class="lbl" style="left:141.6px;top:70.0px;letter-spacing:0.636px;font-size:14.6px">Driver</div>
<div class="lbl" style="left:141.6px;top:90.0px;letter-spacing:0.141px;font-size:14.6px">Booster 7</div>
<div class="lbl" style="left:47.3px;top:193.5px;letter-spacing:0.516px;font-size:14.6px">Belgelerim</div>
<div class="lbl" style="left:47.3px;top:317.0px;letter-spacing:0.775px;font-size:14.6px">Microsoft</div>
<div class="lbl" style="left:46.2px;top:337.0px;letter-spacing:0.302px;font-size:14.6px">Edge</div>
<div class="lbl" style="left:46.7px;top:439.5px;letter-spacing:0.628px;font-size:14.6px">Google</div>
<div class="lbl" style="left:47.1px;top:459.5px;letter-spacing:0.239px;font-size:14.6px">Chrome</div>
<div class="lbl" style="left:46.6px;top:562.5px;letter-spacing:0.422px;font-size:14.6px">Discord</div>
<div class="lbl" style="left:47.5px;top:686.0px;letter-spacing:0.433px;font-size:14.6px">League of</div>
<div class="lbl" style="left:46.4px;top:706.0px;letter-spacing:0.083px;font-size:14.6px">Legends</div>
<div class="lbl" style="left:46.7px;top:808.5px;letter-spacing:0.125px;font-size:14.6px">Conqueror&#x27;s</div>
<div class="lbl" style="left:46.1px;top:828.5px;letter-spacing:0.493px;font-size:14.6px">Blade</div>
<div class="lbl" style="left:47.0px;top:932.0px;letter-spacing:-0.297px;font-size:14.6px">GeForce</div>
<div class="lbl" style="left:47.1px;top:952.0px;letter-spacing:0.032px;font-size:14.6px">Experience</div>
<div class="lbl" style="left:1851.2px;top:931.3px;letter-spacing:-0.059px;font-size:14.6px">Geri</div>
<div class="lbl" style="left:1852.2px;top:951.3px;letter-spacing:-0.171px;font-size:14.6px">Dönüşü...</div>
<div class="t" style="left:1792.3px;top:1035.3px;font-size:14.6px;line-height:18px;letter-spacing:-0.183px">00:54</div>
<div class="t" style="left:1780.6px;top:1057.5px;font-size:14.6px;line-height:18px;letter-spacing:-0.467px">1.10.2020</div>

</body></html>
